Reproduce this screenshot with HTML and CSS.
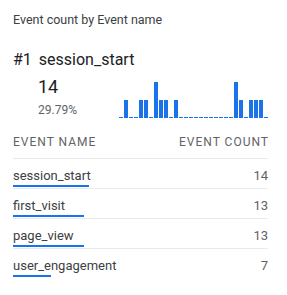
FILE: index.html
```html
<!DOCTYPE html>
<html lang="en">
<head>
    <meta charset="UTF-8">
    <meta name="viewport" content="width=device-width, initial-scale=1.0">
    <title>Event count by Event name</title>
    <link rel="stylesheet" href="styles.css">
</head>
<body>
    <div class="card">
        <div class="title">Event count by Event name</div>
        <div class="top-name"><span class="rank">#1</span>session_start</div>
        <div class="summary">
            <div class="totals">
                <div class="big">14</div>
                <div class="pct">29.79%</div>
            </div>
            <div class="chart">
                <span class="bar"></span><span class="bar v1"></span><span class="bar"></span><span class="bar"></span>
                <span class="bar v1"></span><span class="bar v1"></span><span class="bar"></span><span class="bar v2"></span>
                <span class="bar v1"></span><span class="bar v1"></span><span class="bar"></span><span class="bar v1"></span>
                <span class="bar"></span><span class="bar"></span><span class="bar"></span><span class="bar"></span>
                <span class="bar"></span><span class="bar"></span><span class="bar"></span><span class="bar"></span>
                <span class="bar"></span><span class="bar"></span><span class="bar"></span><span class="bar v2"></span>
                <span class="bar v1"></span><span class="bar"></span><span class="bar v1"></span><span class="bar v1"></span>
                <span class="bar v1"></span><span class="bar"></span>
            </div>
        </div>
        <div class="table">
            <div class="head">
                <span>Event name</span>
                <span>Event count</span>
            </div>
            <div class="row">
                <div class="cells"><span class="name">session_start</span><span class="count">14</span></div>
                <div class="share" style="width: 29.79%"></div>
            </div>
            <div class="row">
                <div class="cells"><span class="name">first_visit</span><span class="count">13</span></div>
                <div class="share" style="width: 27.66%"></div>
            </div>
            <div class="row">
                <div class="cells"><span class="name">page_view</span><span class="count">13</span></div>
                <div class="share" style="width: 27.66%"></div>
            </div>
            <div class="row">
                <div class="cells"><span class="name">user_engagement</span><span class="count">7</span></div>
                <div class="share" style="width: 14.89%"></div>
            </div>
        </div>
    </div>
</body>
</html>
```

FILE: styles.css
```css
body {
    margin: 0;
    font-family: Roboto, "Liberation Sans", Arial, sans-serif;
    background-color: #ffffff;
    color: #3c4043;
}
.card {
    width: 255px;
    padding: 12px 19px 0 13px;
}
.title {
    font-size: 12.5px;
    line-height: 16px;
    color: #3c4043;
}
.top-name {
    margin-top: 23px;
    font-size: 16px;
    line-height: 18px;
    color: #202124;
}
.rank {
    margin-right: 7px;
}
.summary {
    display: flex;
    align-items: flex-end;
    padding-left: 25px;
    margin-top: 7px;
}
.totals {
    width: 82px;
}
.big {
    font-size: 18px;
    line-height: 22px;
    color: #202124;
}
.pct {
    margin-top: 5px;
    font-size: 12px;
    line-height: 14px;
    color: #5f6368;
}
.chart {
    display: flex;
    align-items: flex-end;
    gap: 1px;
    height: 36px;
    margin-bottom: -1px;
}
.bar {
    width: 4px;
    height: 1px;
    background-color: #1a73e8;
}
.bar.v1 {
    height: 18px;
}
.bar.v2 {
    height: 36px;
}
.table {
    margin-top: 18px;
}
.head {
    display: flex;
    justify-content: space-between;
    padding-bottom: 9px;
    border-bottom: 1px solid #e8eaed;
    font-size: 12px;
    line-height: 14px;
    letter-spacing: 1px;
    text-transform: uppercase;
    color: #5f6368;
}
.head span:last-child {
    margin-right: -1px;
}
.row {
    padding: 9px 0 1px;
    border-bottom: 1px solid #e8eaed;
}
.row:last-child {
    border-bottom: none;
}
.cells {
    display: flex;
    justify-content: space-between;
    font-size: 13px;
    line-height: 16px;
}
.name {
    color: #3c4043;
}
.count {
    color: #5f6368;
}
.share {
    height: 2px;
    margin-top: 1px;
    background-color: #1a73e8;
}
```
